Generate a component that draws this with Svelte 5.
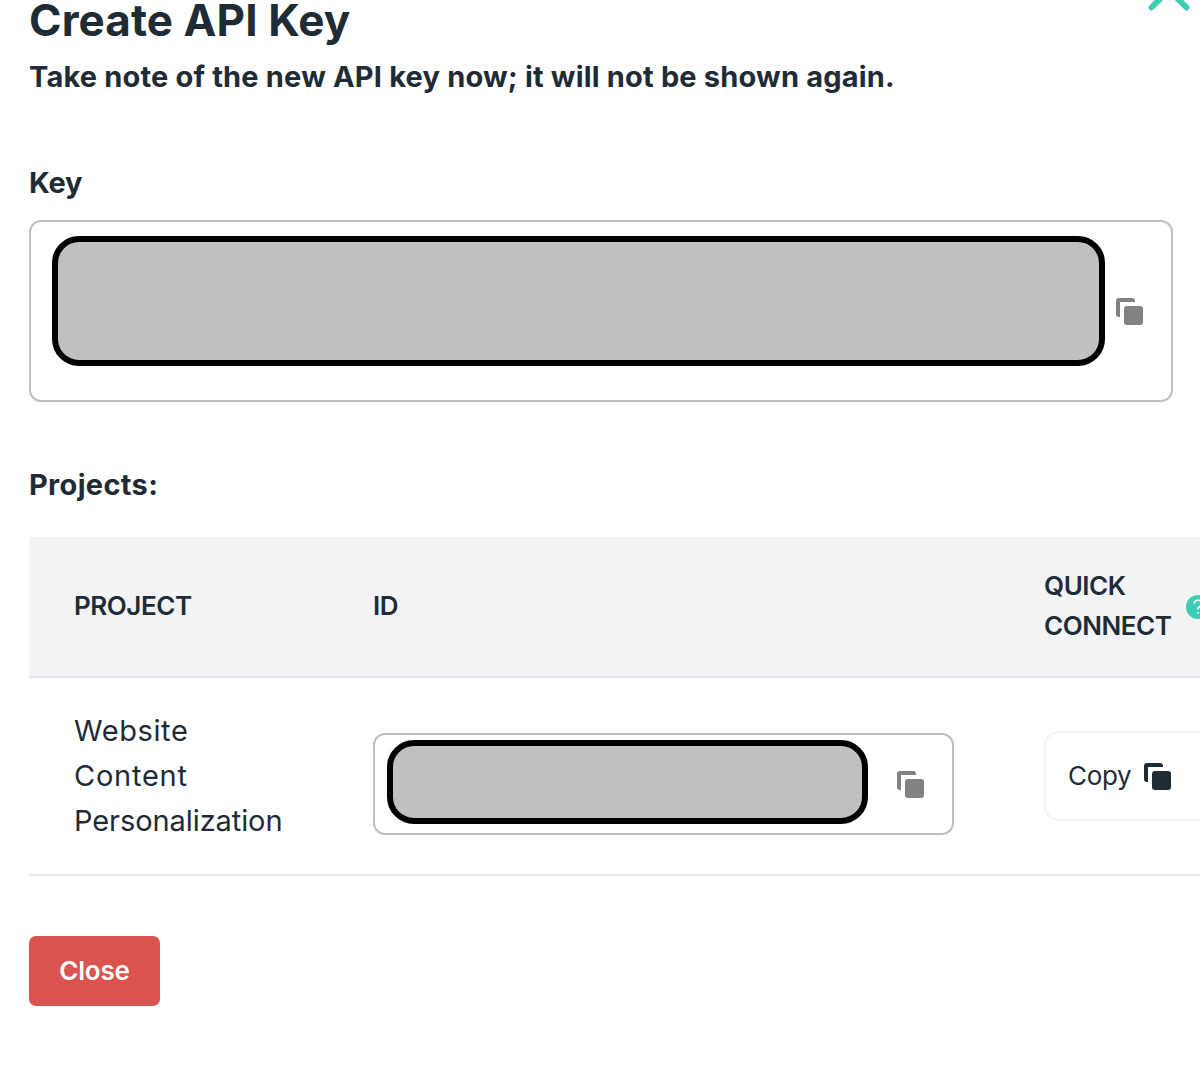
<script>
  const columns = ['PROJECT', 'ID'];
</script>

{#snippet copyIcon()}
  <svg class="copy-icon" viewBox="0 0 27 27" aria-hidden="true">
    <path d="M3 0H16Q19 0 19 3V4H4V19H3Q0 19 0 16V3Q0 0 3 0Z" />
    <rect x="8" y="8" width="19" height="19" rx="3" />
  </svg>
{/snippet}

<main class="dialog">
  <header class="top">
    <h1>Create API Key</h1>
    <button class="dismiss" aria-label="Dismiss">
      <svg viewBox="0 0 42 42" aria-hidden="true"><path d="M3.5 3.5L38.5 38.5M38.5 3.5L3.5 38.5" /></svg>
    </button>
  </header>
  <p class="note">Take note of the new API key now; it will not be shown again.</p>

  <h2 class="key-label">Key</h2>
  <div class="key-field">
    <div class="redacted"></div>
    {@render copyIcon()}
  </div>

  <h2 class="projects-label">Projects:</h2>
  <section class="table">
    <div class="row head">
      {#each columns as column}
        <span>{column}</span>
      {/each}
      <div class="quick">
        <div class="quick-label"><div>QUICK</div><div class="connect">CONNECT</div></div>
        <svg class="help" viewBox="0 0 24 24" aria-hidden="true">
          <circle cx="12" cy="12" r="12" />
          <path d="M8.2 8.8C8.4 6.6 10 5.2 12 5.2C14.2 5.2 15.8 6.5 15.8 8.5C15.8 11.2 12 11.3 12 14.4M12 17V18.8" />
        </svg>
      </div>
    </div>
    <div class="row body">
      <div class="name">
        <div class="w1">Website</div>
        <div class="w2">Content</div>
        <div class="w3">Personalization</div>
      </div>
      <div class="id-field">
        <div class="redacted"></div>
        {@render copyIcon()}
      </div>
      <button class="copy"><span>Copy</span>{@render copyIcon()}</button>
    </div>
  </section>

  <button class="close"><span>Close</span></button>
</main>

<style>
  :global(body) {
    background: #fff;
    overflow: hidden;
  }
  .dialog {
    box-sizing: border-box;
    width: 1200px;
    height: 1079px;
    padding-left: 29px;
    overflow: hidden;
    color: #1f2b35;
    font-family: Inter, "Open Sans", sans-serif;
  }
  h1, h2, p {
    margin: 0;
    white-space: nowrap;
  }
  button {
    box-sizing: border-box;
    margin: 0;
    font-family: inherit;
    color: inherit;
  }
  .top {
    display: flex;
    justify-content: space-between;
    align-items: flex-start;
    height: 52px;
    padding-right: 10px;
  }
  h1 {
    font-size: 44px;
    line-height: 40px;
    font-weight: 700;
    letter-spacing: 0.1px;
  }
  .dismiss {
    width: 42px;
    height: 42px;
    margin-top: -31px;
    padding: 0;
    border: 0;
    background: none;
  }
  .dismiss svg {
    display: block;
    fill: none;
    stroke: #3bceb5;
    stroke-width: 6;
    stroke-linecap: round;
  }
  .note, h2 {
    font-size: 29px;
    line-height: 50px;
    font-weight: 650;
  }
  .note {
    letter-spacing: 0.18px;
  }
  .key-label {
    margin-top: 56px;
    letter-spacing: -0.2px;
  }
  .key-field {
    box-sizing: border-box;
    display: flex;
    align-items: center;
    width: 1144px;
    height: 182px;
    margin-top: 12px;
    padding-left: 21px;
    border: 2px solid #bfbfbf;
    border-radius: 12px;
    gap: 11px;
  }
  .redacted {
    box-sizing: border-box;
    border: 6px solid #000;
    border-radius: 27px;
    background: #c0c0c0;
  }
  .key-field .redacted {
    width: 1053px;
    height: 130px;
    margin-bottom: 20px;
  }
  .copy-icon {
    display: block;
    flex: none;
    width: 27px;
    height: 27px;
    fill: #828282;
  }
  .projects-label {
    margin-top: 58px;
    letter-spacing: 0.33px;
  }
  .table {
    margin-top: 27px;
  }
  .row {
    box-sizing: border-box;
    display: grid;
    grid-template-columns: 299px 671px 1fr;
    align-items: center;
    padding-left: 45px;
  }
  .head {
    height: 141px;
    padding-bottom: 2px;
    border-bottom: 2px solid #e1e4e8;
    background: #f2f3f5;
    font-size: 26px;
    line-height: 40px;
    font-weight: 600;
    letter-spacing: -0.45px;
  }
  .quick {
    display: flex;
    align-items: center;
    width: 180px;
  }
  .quick-label {
    width: 142px;
  }
  .help {
    flex: none;
    width: 24px;
    height: 24px;
    margin-top: 2px;
    fill: #3bceb5;
  }
  .help path {
    fill: none;
    stroke: #fff;
    stroke-width: 1.6;
  }
  .body {
    height: 198px;
    border-bottom: 2px solid #e6e7eb;
  }
  .name {
    padding-bottom: 2px;
    font-size: 29px;
    line-height: 45px;
  }
  .w1 {
    letter-spacing: 0.6px;
  }
  .w2 {
    letter-spacing: 0.75px;
  }
  .w3 {
    letter-spacing: -0.08px;
  }
  .id-field {
    box-sizing: border-box;
    display: flex;
    align-items: center;
    width: 581px;
    height: 102px;
    margin-top: 16px;
    padding-left: 12px;
    border: 2px solid #bfbfbf;
    border-radius: 12px;
    gap: 29px;
  }
  .id-field .redacted {
    width: 481px;
    height: 84px;
    margin-bottom: 4px;
  }
  .copy {
    display: flex;
    align-items: center;
    width: 180px;
    height: 90px;
    padding: 0 0 0 22px;
    border: 2px solid #f2f3f3;
    border-radius: 15px;
    background: #fff;
    font-size: 26px;
    font-weight: 400;
    letter-spacing: -0.3px;
  }
  .copy span {
    width: 76px;
    padding-bottom: 2px;
    text-align: left;
  }
  .copy .copy-icon {
    fill: #1f2b35;
  }
  .close {
    width: 131px;
    height: 70px;
    margin-top: 60px;
    padding: 0 0 2px;
    border: 0;
    border-radius: 7px;
    background: #d9534f;
    color: #fff;
    font-size: 26px;
    font-weight: 600;
    letter-spacing: -0.2px;
  }
</style>
